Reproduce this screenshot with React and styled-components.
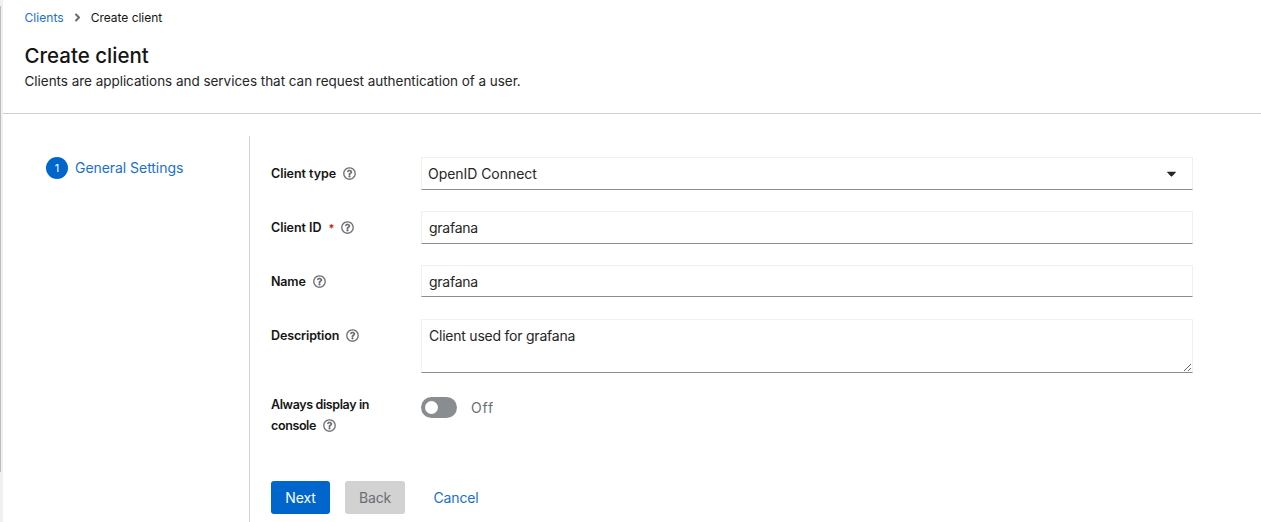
import React from "react";
import styled, { createGlobalStyle } from "styled-components";
import { FaAngleRight, FaCaretDown, FaRegQuestionCircle } from "react-icons/fa";

const GlobalStyle = createGlobalStyle`
  * { box-sizing: border-box; }
  body { margin: 0; background: #fff; overflow: hidden; }
  body, input, textarea, button {
    font-family: Inter, "Open Sans", sans-serif;
    font-size: 14px;
    color: #262626;
  }
`;

const Page = styled.div`
  display: flex;
  height: 522px;
`;
const ScrollTrack = styled.div`
  flex: 0 0 3px;
  background: #f0f0f0;
  padding-top: 6px;
`;
const ScrollThumb = styled.div`
  width: 1px;
  height: 466px;
  background: #bdbdbd;
`;
const Main = styled.main`
  flex: 1;
  min-width: 0;
  display: flex;
  flex-direction: column;
`;
const Header = styled.header`
  height: 114px;
  padding: 7px 22px 0 21.5px;
  border-bottom: 1px solid #d2d2d2;
`;
const Breadcrumb = styled.nav`
  display: flex;
  align-items: center;
  height: 20px;
  font-size: 12px;
  white-space: nowrap;
  svg { margin: 0 7px 0 7px; color: #6a6e73; }
`;
const Crumb = styled.span`
  color: #151515;
  letter-spacing: -0.02px;
`;
const CrumbLink = styled.a`
  color: #1a70cc;
  letter-spacing: 0.05px;
`;
const Title = styled.h1`
  margin: 15px 0 0;
  color: #151515;
  font-size: 20.5px;
  line-height: 27px;
  font-weight: 500;
  letter-spacing: 0;
`;
const Subtitle = styled.p`
  margin: 1px 0 0;
  font-size: 13.5px;
  line-height: 22px;
  letter-spacing: -0.035px;
`;
const Wizard = styled.div`
  flex: 1;
  display: flex;
  padding-top: 22px;
`;
const Steps = styled.nav`
  flex: 0 0 247px;
  padding: 21px 0 0 43px;
  border-right: 1px solid #d2d2d2;
`;
const Step = styled.a`
  display: flex;
  align-items: center;
  gap: 7px;
  height: 22px;
  color: #1a70cc;
  letter-spacing: -0.05px;
  line-height: 20px;
  white-space: nowrap;
`;
const StepNumber = styled.span`
  width: 22px;
  height: 22px;
  border-radius: 50%;
  background: #0066cc;
  color: #fff;
  font-size: 11px;
  line-height: 22px;
  text-align: center;
`;
const Form = styled.form`
  width: 943px;
  padding: 21px 0 0 21px;
`;
const Row = styled.div`
  display: grid;
  grid-template-columns: 150px 772px;
  height: ${(p) => p.$height || 54}px;
`;
const Label = styled.label`
  padding-top: ${(p) => p.$top ?? 6}px;
  color: #151515;
  font-size: 12.5px;
  line-height: 21px;
  font-weight: 600;
  letter-spacing: ${(p) => p.$track || 0}px;
  white-space: nowrap;
  svg {
    width: 13px;
    height: 13px;
    margin-left: 7px;
    vertical-align: -2px;
    color: #6a6e73;
    stroke: currentColor;
    stroke-width: 5px;
  }
`;
const Required = styled.span`
  margin-left: 7px;
  color: #c9190b;
  font-size: 11px;
`;
const fieldBorder = `
  border: 1px solid #f0f0f0;
  border-bottom-color: #8a8d90;
  border-radius: 0;
  background: #fff;
  outline: none;
`;
const Select = styled.div`
  ${fieldBorder}
  display: flex;
  align-items: center;
  justify-content: space-between;
  height: 33px;
  padding: 0 13px 1px 6px;
  letter-spacing: -0.05px;
`;
const Input = styled.input`
  ${fieldBorder}
  width: 100%;
  height: ${(p) => p.$height}px;
  padding: 0 7px;
  letter-spacing: -0.25px;
`;
const TextArea = styled.textarea`
  ${fieldBorder}
  display: block;
  width: 100%;
  height: 54px;
  padding: 5px 7px;
  line-height: 21px;
  letter-spacing: -0.23px;
  resize: both;
`;
const SwitchLine = styled.div`
  display: flex;
  align-items: center;
  gap: 14px;
  height: 21px;
  margin-top: 3px;
  color: #6a6e73;
  letter-spacing: 0.8px;
`;
const Switch = styled.span`
  width: 36px;
  height: 21px;
  padding: 4px;
  border-radius: 11px;
  background: #8a8d90;
`;
const Knob = styled.span`
  display: block;
  width: 13px;
  height: 13px;
  border-radius: 50%;
  background: #fff;
`;
const Actions = styled.div`
  display: flex;
  margin-top: 13px;
  gap: 15px;
`;
const Button = styled.button`
  width: ${(p) => p.$width}px;
  height: 33px;
  padding: 0 0 1px;
  border: 0;
  border-radius: 3px;
  background: ${(p) => p.$bg};
  color: ${(p) => p.$color};
  letter-spacing: -0.15px;
`;

export default function App() {
  return (
    <>
      <GlobalStyle />
      <Page>
        <ScrollTrack><ScrollThumb /></ScrollTrack>
        <Main>
          <Header>
            <Breadcrumb>
              <CrumbLink>Clients</CrumbLink>
              <FaAngleRight size={13} />
              <Crumb>Create client</Crumb>
            </Breadcrumb>
            <Title>Create client</Title>
            <Subtitle>Clients are applications and services that can request authentication of a user.</Subtitle>
          </Header>
          <Wizard>
            <Steps>
              <Step><StepNumber>1</StepNumber>General Settings</Step>
            </Steps>
            <Form>
              <Row>
                <Label $track={-0.05}>Client type<FaRegQuestionCircle /></Label>
                <Select>OpenID Connect<FaCaretDown size={15} /></Select>
              </Row>
              <Row>
                <Label $track={-0.05}>Client ID<Required>*</Required><FaRegQuestionCircle /></Label>
                <Input $height={33} defaultValue="grafana" />
              </Row>
              <Row>
                <Label $track={-0.15}>Name<FaRegQuestionCircle /></Label>
                <Input $height={32} defaultValue="grafana" />
              </Row>
              <Row $height={75}>
                <Label $track={-0.13}>Description<FaRegQuestionCircle /></Label>
                <TextArea defaultValue="Client used for grafana" spellCheck={false} />
              </Row>
              <Row $height={74}>
                <Label $top={0} $track={-0.38}>Always display in<br />console<FaRegQuestionCircle /></Label>
                <SwitchLine><Switch><Knob /></Switch>Off</SwitchLine>
              </Row>
              <Actions>
                <Button type="button" $width={59} $bg="#0066cc" $color="#fff">Next</Button>
                <Button type="button" $width={60} $bg="#d2d2d2" $color="#6a6e73">Back</Button>
                <Button type="button" $width={72} $bg="transparent" $color="#1a70cc">Cancel</Button>
              </Actions>
            </Form>
          </Wizard>
        </Main>
      </Page>
    </>
  );
}
